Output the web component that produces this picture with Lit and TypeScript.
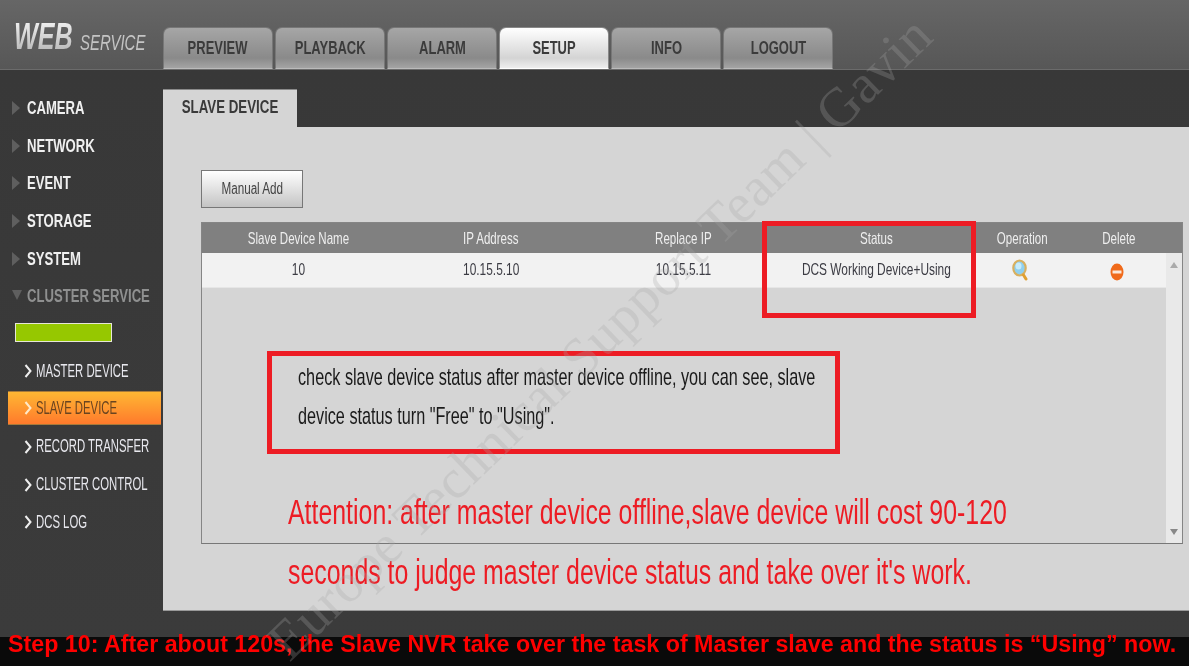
import { LitElement, html, css } from "lit";
import { customElement } from "lit/decorators.js";

@customElement("app-root")
export class AppRoot extends LitElement {
  static styles = css`
    :host { display: block; position: relative; width: 1189px; height: 666px; overflow: hidden; background: #383838; font-family: "Liberation Sans", Arial, sans-serif; filter: blur(.35px); }
    .s { display: inline-block; white-space: nowrap; transform: scaleX(.7); transform-origin: center; }
    .sl { transform-origin: left center; }
    header { height: 70px; box-sizing: border-box; display: flex; background: linear-gradient(#666, #575757); border-bottom: 1px solid #6b6b6b; }
    .logo { width: 163px; padding: 13px 0 0 14px; box-sizing: border-box; font-style: italic; white-space: nowrap; display: flex; align-items: flex-start; }
    .logo .web { font-size: 37px; font-weight: bold; line-height: 48px; padding-right: 6px; transform: scaleX(.68); transform-origin: left center; margin-right: -26px; background: linear-gradient(#fff, #a8a8a8); -webkit-background-clip: text; background-clip: text; color: transparent; }
    .logo .svc { font-size: 22px; line-height: 30px; margin-top: 15px; color: #c4c4c4; transform: scaleX(.68); transform-origin: left center; }
    nav { display: flex; gap: 2px; padding-top: 27px; }
    .tab { width: 110px; height: 42px; box-sizing: border-box; display: flex; align-items: center; justify-content: center; padding-top: 1px; border-radius: 7px 7px 0 0; background: linear-gradient(#a6a6a6, #8a8a8a 75%, #a4a4a4); border: 1px solid #777; border-bottom: 1px solid #bbb; color: #3b3b3b; font-weight: bold; font-size: 18px; }
    .tab .s { transform: scaleX(.72); }
    .tab.on { background: linear-gradient(#fff, #d4d4d4 75%, #eee); border-color: #888; border-bottom-color: #fff; }
    .body { display: flex; height: 567px; background: linear-gradient(#383838, #3b3b3b); }
    aside { width: 163px; flex: none; padding-top: 19px; box-sizing: border-box; }
    .item { height: 37.7px; display: flex; align-items: center; padding-left: 27px; position: relative; color: #f0f0f0; font-weight: bold; font-size: 19px; }
    .item .s { transform: scaleX(.69); }
    .item.dim { color: #8f9090; }
    .tri { position: absolute; left: 12px; top: 12px; border-left: 8px solid #5f5f5f; border-top: 7px solid transparent; border-bottom: 7px solid transparent; }
    .tri.down { border-top: 10px solid #5f5f5f; border-left: 5px solid transparent; border-right: 5px solid transparent; border-bottom: 0; left: 12px; top: 13px; }
    .green { width: 97px; height: 19px; box-sizing: border-box; margin: 8px 0 0 15px; background: #96c800; border: 1px solid #e6e6d8; }
    .subs { margin-top: 10px; }
    .sub { height: 37.8px; display: flex; align-items: center; gap: 4px; padding-left: 24px; color: #e8e8ee; font-size: 18px; }
    .sub svg { flex: none; width: 8px; height: 14px; }
    .sub .s { transform: scaleX(.63); }
    .sub.on { height: 34px; box-sizing: border-box; margin: 1px 2px 3px 8px; padding-left: 16px; padding-top: 1px; color: #6a4420; background: linear-gradient(#ffb733, #ff7a2c); border: 1px solid #a87a3a; border-width: 1px 0 1px 0; }
    main { flex: 1; padding-top: 19px; }
    .ptab { width: 134px; height: 38px; display: flex; align-items: center; justify-content: center; padding-bottom: 4px; box-sizing: border-box; background: #d5d5d5; border-top: 1px solid #8a8a8a; color: #3a3a3a; font-weight: bold; font-size: 19px; }
    .panel { height: 484px; box-sizing: border-box; background: #d5d5d5; border-bottom: 1px solid #999; padding: 43px 7px 0 38px; }
    .btn { width: 102px; height: 38px; display: flex; align-items: center; justify-content: center; box-sizing: border-box; border: 1px solid #777; background: linear-gradient(#fff, #c4c4c4); color: #444; font-size: 16px; }
    .btn .s { transform: scaleX(.73); }
    .table { margin-top: 14px; height: 322px; box-sizing: border-box; border: 1px solid #858585; border-bottom-color: #777; position: relative; }
    .row { display: grid; grid-template-columns: 193px 192px 193px 192px 100px 94px 16px; align-items: center; text-align: center; }
    .row > div { display: flex; align-items: center; justify-content: center; }
    .th { height: 30px; background: #808080; color: #eee; font-size: 16.5px; }
    .td { height: 35px; color: #3c3c44; font-size: 17px; background: linear-gradient(to right, #f2f2f2 964px, transparent 964px); border-bottom: 1px solid #e6e6e6; box-sizing: border-box; }
    .op { margin-right: 4px; }
    .del { margin: 3px 5px 0 0; }
    .scroll { position: absolute; right: 0; top: 30px; bottom: 0; width: 16px; background: #e9e9e9; }
    .up, .dn { position: absolute; left: 4px; border-left: 4px solid transparent; border-right: 4px solid transparent; }
    .up { top: 9px; border-bottom: 6px solid #aaa; }
    .dn { bottom: 8px; border-top: 6px solid #888; }
    .foot { height: 29px; background: #0a0a0a; }
    .rbox { position: absolute; box-sizing: border-box; border: 5px solid #ed1c24; }
    .status { left: 762px; top: 221px; width: 214px; height: 97px; }
    .noteb { left: 267px; top: 351px; width: 573px; height: 103px; }
    .note { position: absolute; left: 298px; top: 357px; color: #1a1a1a; font-size: 24px; line-height: 39px; white-space: nowrap; }
    .note .s { display: block; width: max-content; transform: scaleX(.676); }
    .attn { position: absolute; left: 288px; top: 482px; color: #ed1c24; font-size: 35px; line-height: 60px; white-space: nowrap; }
    .attn .s { display: block; width: max-content; transform: scaleX(.711); }
    .step { position: absolute; left: 8px; top: 630px; color: #f00; font-weight: bold; font-size: 23.24px; line-height: 28px; white-space: nowrap; }
    .wm { position: absolute; left: 120px; top: 305px; width: 960px; text-align: center; font-family: "Liberation Serif", serif; font-size: 55px; line-height: 66px; letter-spacing: .5px; white-space: nowrap; color: rgba(165,165,165,.27); transform: rotate(-44deg); pointer-events: none; }
  `;

  render() {
    const tabs = ["PREVIEW", "PLAYBACK", "ALARM", "SETUP", "INFO", "LOGOUT"];
    const top = ["CAMERA", "NETWORK", "EVENT", "STORAGE", "SYSTEM"];
    const subs = ["MASTER DEVICE", "SLAVE DEVICE", "RECORD TRANSFER", "CLUSTER CONTROL", "DCS LOG"];
    const chev = (c: string) => html`<svg viewBox="0 0 8 14"><path d="M1.5 1 L6.5 7 L1.5 13" fill="none" stroke=${c} stroke-width="2"/></svg>`;
    return html`
      <header>
        <div class="logo"><span class="web">WEB</span><span class="svc">SERVICE</span></div>
        <nav>${tabs.map((t) => html`<div class="tab ${t === "SETUP" ? "on" : ""}"><span class="s">${t}</span></div>`)}</nav>
      </header>
      <div class="body">
        <aside>
          ${top.map((t) => html`<div class="item"><i class="tri"></i><span class="s sl">${t}</span></div>`)}
          <div class="item dim"><i class="tri down"></i><span class="s sl">CLUSTER SERVICE</span></div>
          <div class="green"></div>
          <div class="subs">
            ${subs.map((t) => html`<div class="sub ${t === "SLAVE DEVICE" ? "on" : ""}">${chev(t === "SLAVE DEVICE" ? "#ffe9c8" : "#eee")}<span class="s sl">${t}</span></div>`)}
          </div>
        </aside>
        <main>
          <div class="ptab"><span class="s">SLAVE DEVICE</span></div>
          <div class="panel">
            <div class="btn"><span class="s">Manual Add</span></div>
            <div class="table">
              <div class="row th">
                ${["Slave Device Name", "IP Address", "Replace IP", "Status", "Operation", "Delete"].map((h) => html`<div><span class="s">${h}</span></div>`)}
              </div>
              <div class="row td">
                ${["10", "10.15.5.10", "10.15.5.11", "DCS Working Device+Using"].map((c) => html`<div><span class="s">${c}</span></div>`)}
                <div>
                  <svg class="op" width="16" height="22" viewBox="0 0 16 22">
                    <ellipse cx="7.5" cy="9" rx="6.2" ry="7.5" fill="#8fd0f0" stroke="#d8b060" stroke-width="2.2"/>
                    <ellipse cx="6.5" cy="7" rx="3" ry="3.5" fill="#c8ecfa"/>
                    <path d="M11.5 16 L14 20" stroke="#e0a030" stroke-width="3" stroke-linecap="round"/>
                  </svg>
                </div>
                <div>
                  <svg class="del" width="14" height="18" viewBox="0 0 14 18">
                    <ellipse cx="7" cy="9" rx="6.5" ry="8.5" fill="#f06a1a"/>
                    <rect x="2.5" y="7.5" width="9" height="3" fill="#fbe8d8"/>
                  </svg>
                </div>
              </div>
              <div class="scroll"><i class="up"></i><i class="dn"></i></div>
            </div>
          </div>
        </main>
      </div>
      <div class="foot"></div>
      <div class="note">
        <span class="s sl">check slave device status after master device offline, you can see, slave</span>
        <span class="s sl">device status turn "Free" to "Using".</span>
      </div>
      <div class="attn">
        <span class="s sl">Attention: after master device offline,slave device will cost 90-120</span>
        <span class="s sl">seconds to judge master device status and take over it's work.</span>
      </div>
      <div class="rbox status"></div>
      <div class="rbox noteb"></div>
      <div class="step">Step 10: After about 120s, the Slave NVR take over the task of Master slave and the status is “Using” now.</div>
      <div class="wm">Europe Technical Support Team | Gavin</div>
    `;
  }
}
